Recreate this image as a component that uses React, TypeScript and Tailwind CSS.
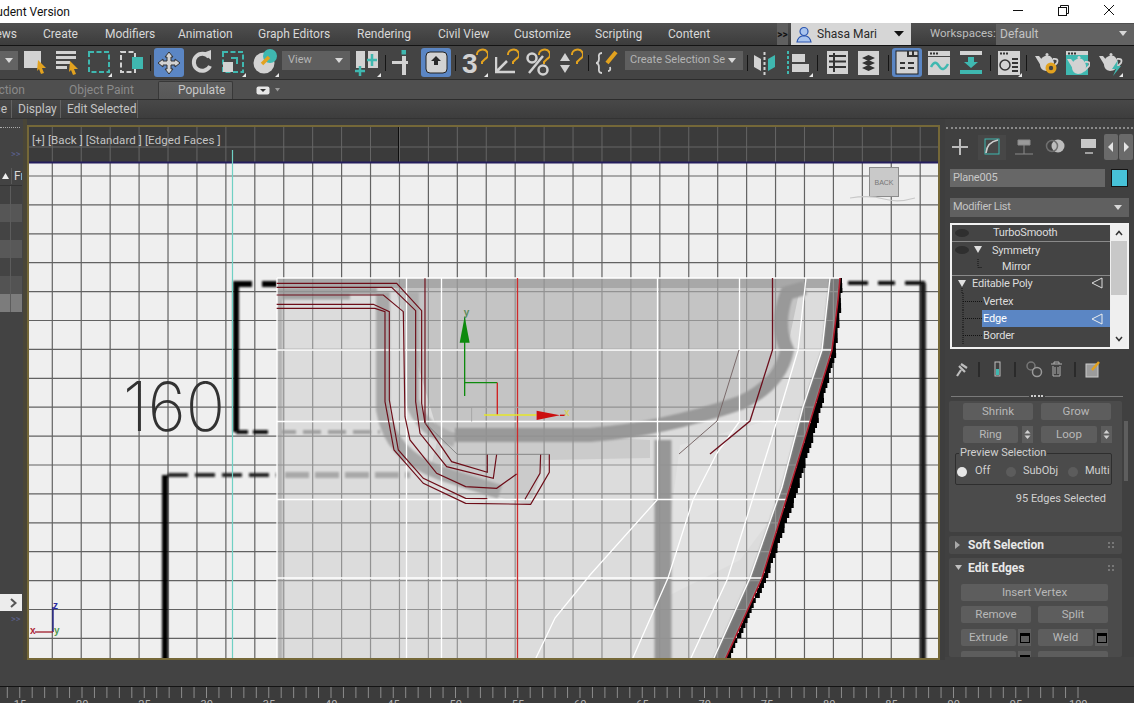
import React from 'react';

const teal = '#3fb8b0';
const lite = '#d2d2d2';
const gold = '#e2a21f';

const menus: [string, string][] = [
  ['Create', 'w-[62px]'],
  ['Modifiers', 'w-[73px]'],
  ['Animation', 'w-[80px]'],
  ['Graph Editors', 'w-[99px]'],
  ['Rendering', 'w-[81px]'],
  ['Civil View', 'w-[76px]'],
  ['Customize', 'w-[81px]'],
  ['Scripting', 'w-[73px]'],
  ['Content', 'w-[109px]'],
];

function Ico({ w, className = '', children }: { w: number; className?: string; children?: React.ReactNode }) {
  return (
    <svg width={w} height={30} viewBox={`0 0 ${w} 30`} className={`shrink-0 ${className}`}>
      {children}
    </svg>
  );
}

function Sep({ className = '' }: { className?: string }) {
  return <div className={`w-px h-[16px] mt-[8px] bg-[#151515] shrink-0 ${className}`} />;
}

function Corner({ x }: { x: number }) {
  return <polygon points={`${x},26 ${x},30 ${x - 4},30`} fill="#e8e8e8" />;
}

function Caret({ className = '' }: { className?: string }) {
  return (
    <svg width="8" height="6" viewBox="0 0 8 6" className={`shrink-0 ${className}`}>
      <polygon points="0,0 8,0 4,5" fill="#d8d8d8" />
    </svg>
  );
}

function Magnet({ x, y }: { x: number; y: number }) {
  return (
    <path
      d={`M${x} ${y + 4} a5.5 5 0 1 1 8 4 l-3 3 v2`}
      fill="none"
      stroke={gold}
      strokeWidth="2"
    />
  );
}

function Teapot({ fill = lite }: { fill?: string }) {
  return (
    <g>
      <polygon points="0,9 4,9 8,14 6,19" fill={fill} />
      <path d="M6 12 Q10 7 15 9 Q19 12 19 17 Q18 24 11 24 Q5 23 5 17 Z" fill={fill} />
      <circle cx="12" cy="7.500" r="1.500" fill={fill} />
      <path d="M18 12 Q24 11 22 16 L17 21" fill="none" stroke={fill} strokeWidth="1.800" />
    </g>
  );
}

function Toolbar() {
  return (
    <div className="h-[34px] bg-[#444444] border-b border-[#2c2c2c] flex items-start pt-[1px] overflow-hidden">
      <div className="w-[18px] h-[19px] mt-[4px] bg-[#636363] flex items-center justify-center shrink-0">
        <Caret />
      </div>
      <Ico w={24} className="ml-[6px]">
        <rect x="0" y="4" width="17" height="17" fill={lite} />
        <polygon points="14,13 22,21 18,21 20,26 17,27 15,22 13,24" fill={gold} />
      </Ico>
      <Ico w={24} className="ml-[8px]">
        <rect x="0" y="4" width="20" height="3" fill={lite} />
        <rect x="0" y="9" width="20" height="3" fill={lite} />
        <rect x="0" y="14" width="14" height="3" fill={lite} />
        <rect x="0" y="19" width="11" height="3" fill={lite} />
        <polygon points="14,14 22,22 18,22 20,27 17,28 15,23 13,25" fill={gold} />
      </Ico>
      <Ico w={24} className="ml-[8px]">
        <rect x="1" y="5" width="20" height="20" fill="none" stroke={teal} strokeWidth="2" strokeDasharray="5 2.5" />
        <Corner x={24} />
      </Ico>
      <Ico w={24} className="ml-[8px]">
        <rect x="1" y="5" width="14" height="20" fill="none" stroke={lite} strokeWidth="2" strokeDasharray="5 2.5" />
        <rect x="12" y="10" width="11" height="12" fill={teal} />
      </Ico>
      <Sep className="ml-[6px]" />
      <Ico w={30} className="ml-[3px]">
        <rect x="0" y="1" width="30" height="29" rx="3" fill="#5b86c4" />
        <path d="M15 5 L19 10 H17 V14 H21 V12 L26 16 L21 20 V18 H17 V22 H19 L15 27 L11 22 H13 V18 H9 V20 L4 16 L9 12 V14 H13 V10 H11 Z" fill={lite} stroke="#333" strokeWidth="1" />
      </Ico>
      <Ico w={22} className="ml-[7px]">
        <path d="M18 10 A8.5 8.5 0 1 0 19 19" fill="none" stroke={lite} strokeWidth="4" />
        <polygon points="12,6 20,3 20,13" fill={lite} />
      </Ico>
      <Ico w={24} className="ml-[9px]">
        <rect x="1" y="5" width="20" height="20" fill="none" stroke={teal} strokeWidth="2" strokeDasharray="5 2.5" />
        <rect x="1" y="15" width="10" height="10" fill={lite} />
        <path d="M9 11 H15 V17" fill="none" stroke={teal} strokeWidth="2" />
        <Corner x={24} />
      </Ico>
      <Ico w={26} className="ml-[7px]">
        <circle cx="11" cy="16" r="10.5" fill={lite} />
        <circle cx="17" cy="9" r="7" fill={teal} />
        <path d="M9 17 L16 10" stroke={gold} strokeWidth="3.5" />
        <Corner x={26} />
      </Ico>
      <div className="w-[68px] h-[19px] mt-[4px] ml-[3px] bg-[#5f5f5f] flex items-center justify-between pl-[6px] pr-[7px] text-[#b4b4b4] text-[11px] shrink-0">
        View
        <Caret />
      </div>
      <Ico w={26} className="ml-[5px]">
        <rect x="1" y="4" width="9" height="17" fill={lite} />
        <rect x="13" y="4" width="10" height="17" fill={lite} />
        <path d="M5 19 V29 M0 24 H10 M17 7 V19 M12 13 H22" stroke={teal} strokeWidth="2.5" />
        <Corner x={26} />
      </Ico>
      <Sep className="ml-[4px]" />
      <Ico w={24} className="ml-[6px]">
        <rect x="0" y="14" width="16" height="3" fill={lite} />
        <rect x="10" y="9" width="4" height="19" fill={lite} />
        <rect x="9.500" y="3" width="4.500" height="4.500" fill={teal} />
      </Ico>
      <Ico w={30} className="ml-[5px]">
        <rect x="0" y="1" width="30" height="29" rx="3" fill="#5b86c4" />
        <rect x="5" y="5" width="21" height="21" rx="4" fill={lite} stroke="#222" strokeWidth="1" />
        <path d="M13 14 H10 L15 9 L20 14 H17 V18 H13 Z" fill="#2a2a2a" />
      </Ico>
      <Sep className="ml-[4px]" />
      <Ico w={26} className="ml-[6px]">
        <text x="0" y="26" fontSize="28" fontWeight="700" fill={lite} fontFamily="Liberation Sans, sans-serif">3</text>
        <Magnet x={15} y={4} />
        <Corner x={26} />
      </Ico>
      <Ico w={24} className="ml-[7px]">
        <path d="M1 10 V25 H20 M1 25 L12 14" fill="none" stroke={lite} strokeWidth="2.5" />
        <Magnet x={13} y={4} />
      </Ico>
      <Ico w={24} className="ml-[7px]">
        <circle cx="6" cy="11" r="4.5" fill="none" stroke={lite} strokeWidth="2.5" />
        <circle cx="17" cy="23" r="4.5" fill="none" stroke={lite} strokeWidth="2.5" />
        <path d="M3 26 L17 9" stroke={lite} strokeWidth="2.5" />
        <Magnet x={13} y={4} />
      </Ico>
      <Ico w={24} className="ml-[9px]">
        <polygon points="1,14 11,14 6,6" fill={lite} />
        <polygon points="1,18 11,18 6,26" fill={lite} />
        <Magnet x={13} y={4} />
      </Ico>
      <Sep className="ml-[5px]" />
      <Ico w={24} className="ml-[7px]">
        <path d="M6 6 Q2 6 3 11 Q3 16 0 16 Q3 16 3 21 Q2 26 6 26" fill="none" stroke={lite} strokeWidth="1.8" />
        <path d="M12 24 Q15 24 14 20" fill="none" stroke={lite} strokeWidth="1.8" />
        <path d="M11 16 L20 5" stroke={gold} strokeWidth="4" />
      </Ico>
      <div className="w-[118px] h-[19px] mt-[4px] ml-[5px] bg-[#5f5f5f] flex items-center justify-between pl-[5px] pr-[7px] text-[#b4b4b4] text-[11px] whitespace-nowrap shrink-0">
        Create Selection Se
        <Caret />
      </div>
      <Sep className="ml-[4px]" />
      <Ico w={22} className="ml-[6px]">
        <polygon points="0,8 7,12 7,24 0,20" fill={lite} />
        <path d="M10.5 5 V28" stroke={lite} strokeWidth="2" strokeDasharray="3 2" />
        <polygon points="21,8 14,12 14,24 21,20" fill={teal} />
      </Ico>
      <Ico w={26} className="ml-[11px]">
        <path d="M1 4 V28" stroke={teal} strokeWidth="2" strokeDasharray="3 2" />
        <rect x="5" y="7" width="13" height="8" fill={lite} />
        <rect x="5" y="17" width="17" height="8" fill={lite} />
        <Corner x={26} />
      </Ico>
      <Sep className="ml-[4px]" />
      <Ico w={22} className="ml-[9px]">
        <rect x="0" y="4" width="21" height="23" fill={lite} />
        <path d="M2 9 H19 M2 14.5 H19 M2 20 H19 M7 6 V25" stroke="#333" strokeWidth="2" />
      </Ico>
      <Ico w={22} className="ml-[9px]">
        <rect x="0" y="4" width="21" height="24" fill={lite} />
        <path d="M4 11 L10.5 8 L17 11 L10.5 14 Z M4 16 L10.5 13 L17 16 L10.5 19 Z M4 21 L10.5 18 L17 21 L10.5 24 Z" fill="#333" />
      </Ico>
      <Sep className="ml-[8px]" />
      <Ico w={30} className="ml-[3px]">
        <rect x="0" y="1" width="30" height="29" rx="3" fill="#5b86c4" />
        <rect x="4" y="4" width="22" height="23" fill={lite} stroke="#222" />
        <path d="M16 4 V9 H26 M21 4 V9 M8 16 H13 M16 16 H22 M8 21 H13 M16 21 H22" stroke="#333" strokeWidth="2" fill="none" />
      </Ico>
      <Ico w={24} className="ml-[6px]">
        <rect x="0" y="4" width="22" height="5" fill={lite} />
        <rect x="0" y="10" width="22" height="18" fill={lite} />
        <path d="M3 20 Q7 12 11 19 T20 17" fill="none" stroke={teal} strokeWidth="2.5" />
        <path d="M2 6.5 H10" stroke="#333" strokeWidth="2" strokeDasharray="2 1" />
      </Ico>
      <Ico w={24} className="ml-[8px]">
        <rect x="0" y="4" width="22" height="4" fill={lite} />
        <rect x="0" y="23" width="22" height="4" fill={teal} />
        <path d="M8 10 H14 V15 H18 L11 21 L4 15 H8 Z" fill={teal} />
      </Ico>
      <Sep className="ml-[6px]" />
      <Ico w={24} className="ml-[7px]">
        <rect x="0" y="4" width="22" height="24" fill={lite} />
        <path d="M2 6.5 H10" stroke="#333" strokeWidth="2" strokeDasharray="2 1" />
        <circle cx="7" cy="18" r="5" fill="none" stroke="#333" strokeWidth="1.5" />
        <path d="M14 12 H20 M14 16 H20 M14 20 H20 M14 24 H20" stroke="#333" strokeWidth="2" />
        <Corner x={24} />
      </Ico>
      <Sep className="ml-[4px]" />
      <Ico w={24} className="ml-[8px]">
        <Teapot />
        <circle cx="16" cy="21" r="5.500" fill={gold} />
        <circle cx="16" cy="21" r="2.200" fill="#444" />
      </Ico>
      <Ico w={24} className="ml-[7px]">
        <rect x="0" y="4" width="22" height="24" fill={teal} />
        <rect x="0" y="4" width="22" height="4" fill={lite} />
        <path d="M2 6.5 H10" stroke="#333" strokeWidth="2" strokeDasharray="2 1" />
        <g transform="translate(1 3)"><Teapot /></g>
      </Ico>
      <Ico w={24} className="ml-[9px]">
        <Teapot />
        <path d="M19 13 L13 22 H17 L14 29 L22 19 H18 Z" fill={teal} />
        <Corner x={24} />
      </Ico>
    </div>
  );
}

function LeftStrip() {
  const rows = ['bg-[#414141]', 'bg-[#565656]', 'bg-[#444444]', 'bg-[#585858]', 'bg-[#444444]', 'bg-[#535353]', 'bg-[#7c7c7c]'];
  return (
    <div className="w-[27px] shrink-0 bg-[#434343] flex flex-col border-r-[4px] border-[#4a4637]">
      <div className="h-[3px] mt-[8px] w-[20px] border-t border-dotted border-[#aaaaaa]" />
      <div className="h-[29px] mt-[1px] text-[9px] text-[#5c628f] flex items-end pl-[11px] leading-[12px]">&gt;&gt;</div>
      <div className="h-[19px] mt-[7px] w-[22px] flex items-center text-[12px] text-[#d8d8d8] border-b border-[#333333] overflow-hidden">
        <svg width="11" height="10" viewBox="0 0 11 10" className="shrink-0">
          <polygon points="2,8 9,8 5.5,2" fill="#eeeeee" />
        </svg>
        <span className="border-l border-[#5a5a5a] pl-[2px] leading-[16px]">Fr</span>
      </div>
      {rows.map((r, i) => (
        <div key={i} className={`h-[18px] w-[22px] ${r} flex`}>
          <div className="w-[11px] h-full border-r border-[#5c5c5c]" />
        </div>
      ))}
      <div className="w-[22px] h-[17px] mt-[282px] bg-[#ececec] flex items-center justify-end pr-[5px]">
        <svg width="7" height="10" viewBox="0 0 7 10">
          <path d="M1 1 L5.5 5 L1 9" fill="none" stroke="#555555" strokeWidth="2" />
        </svg>
      </div>
      <div className="mt-[2px] pl-[11px] text-[9px] text-[#5c628f]">&gt;&gt;</div>
    </div>
  );
}

const gridX = Array.from({ length: 31 }, (_, i) => 52.3 + i * 28.93);
const gridY = Array.from({ length: 17 }, (_, i) => 176 + i * 28.9);

function Grid({ color, top }: { color: string; top: number }) {
  return (
    <g stroke={color} strokeWidth="1.200">
      {gridX.map((x) => (
        <line key={x} x1={x} y1={top} x2={x} y2={660} />
      ))}
      {gridY.map((y) => (
        <line key={y} x1={27} y1={y} x2={940} y2={y} />
      ))}
    </g>
  );
}

// right outline of the plane: [y, x, width of the black scan line beside it]
const outline = [
  [278, 840, 2],
  [300, 838, 3],
  [350, 832, 4],
  [422, 810, 7],
  [497, 787, 8],
  [578, 762, 4],
  [660, 725, 3],
];

function outlineAt(y: number) {
  const i = Math.max(outline.findIndex((p) => p[0] > y) - 1, 0);
  const [y0, x0, w0] = outline[i];
  const [y1, x1, w1] = outline[i + 1];
  const t = (y - y0) / (y1 - y0);
  return { x: x0 + (x1 - x0) * t, w: w0 + (w1 - w0) * t };
}

const scanY = Array.from({ length: 77 }, (_, i) => 278 + i * 5);

function Scene() {
  const edge = '840,278 838,300 832,350 810,422 787,497 762,578 725,660';
  return (
    <svg width="909" height="531" viewBox="29 127 909 531" className="block" fontFamily="Liberation Sans, sans-serif">
      <defs>
        <clipPath id="plane">
          <polygon points={`277,278 ${edge} 277,660`} />
        </clipPath>
        <filter id="soft">
          <feGaussianBlur stdDeviation="1.2" />
        </filter>
        <filter id="faint">
          <feGaussianBlur stdDeviation="0.6" />
        </filter>
      </defs>
      <rect x="27" y="125" width="913" height="38" fill="#3b3b3b" />
      <rect x="27" y="163" width="913" height="500" fill="#efefef" />
      <g stroke="#666666" strokeWidth="1">
        {gridX.map((x) => (
          <line key={x} x1={x} y1={127} x2={x} y2={163} />
        ))}
        <line x1="29" y1="147" x2="940" y2="147" />
      </g>
      <line x1="398.5" y1="127" x2="398.5" y2="163" stroke="#0c0c0c" strokeWidth="1" />
      <Grid color="#626262" top={163} />
      <rect x="27" y="161.500" width="913" height="2" fill="#241d5c" />

      {/* sketch behind the plane */}
      <g filter="url(#soft)">
        <path d="M236 432 V284 H252 M262 284 H277" fill="none" stroke="#050505" strokeWidth="6" />
        <path d="M236 432 H248 M253 432 H268" stroke="#111111" strokeWidth="4" fill="none" />
        <path d="M165 660 V475" stroke="#050505" strokeWidth="6" fill="none" />
        <path d="M168 475 H277" stroke="#222222" strokeWidth="4" strokeDasharray="20 7" fill="none" />
        <path d="M848 283 H868 M878 283 H895 M905 283 H925" stroke="#111111" strokeWidth="4" fill="none" />
        <path d="M923 283 V660" stroke="#1c1c1c" strokeWidth="6" fill="none" />
      </g>
      <text x="123" y="431" fontSize="68" fontWeight="200" fill="#333333" fontFamily="Inter, sans-serif" textLength="102" lengthAdjust="spacingAndGlyphs" filter="url(#faint)">160</text>

      {/* black edge of the outline, stepped like the low-res backdrop */}
      <g fill="#000000" filter="url(#faint)">
        {scanY.map((y) => {
          const { x, w } = outlineAt(y);
          return <rect key={y} x={Math.round(x / 2) * 2 - 1} y={y} width={w + 1} height={5} />;
        })}
      </g>

      <g clipPath="url(#plane)">
        <rect x="277" y="278" width="570" height="385" fill="#dcdcdc" />
        <polygon points="395,288 800,288 787,350 745,405 650,425 500,440 440,440" fill="#c4c4c4" />
        <polygon points="680,445 770,420 810,422 787,497 740,560 660,600" fill="#e2e2e2" />
        <polygon points="440,430 650,440 650,458 545,460 530,505 490,495 430,470" fill="#cbcbcb" />
        <polygon points="277,278 840,278 840,288 277,288" fill="#a8a8a8" />
        <g filter="url(#soft)" fill="none">
          <path d="M277 291 H377 M277 296 H350" stroke="#a4a4a4" strokeWidth="7" />
          <path d="M383 292 V410 Q390 455 440 473 L500 492" stroke="#a8a8a8" strokeWidth="14" />
          <path d="M412 292 V400 Q420 430 455 440" stroke="#aeaeae" strokeWidth="14" />
          <path d="M455 435 H590 Q660 430 740 403 Q780 385 787 350 Q775 325 787 293 L805 288" stroke="#999999" strokeWidth="14" />
          <path d="M663 440 V660" stroke="#979797" strokeWidth="17" />
          <path d="M278 432 H380" stroke="#a2a2a2" strokeWidth="4" strokeDasharray="18 7" />
          <path d="M285 475 H410" stroke="#a8a8a8" strokeWidth="6" strokeDasharray="24 6" />
          <path d="M280 295 V660" stroke="#b2b2b2" strokeWidth="5" />
          <polygon points="830,278 840,278 838,300 832,350 810,422 787,497 762,578 725,660 713,660 750,578 782,487 803,407 822,350" fill="#777777" />
        </g>
        <Grid color="#929292" top={278} />
      </g>

      {/* white mesh */}
      <g stroke="#ffffff" strokeWidth="1.300" fill="none">
        <path d="M277 278 H840 M277 278 V660" />
        <path d="M277 350 H832 M277 421.500 H810 M277 499.500 H787 M277 578 H762" />
        <path d="M406.500 278 V660 M441.500 278 V660 M657.500 278 V499.500 L590 575 L555 618 L535 660" />
        <path d="M739.500 278 V421.500 L717 453 L693 500 L668 578 L632 660" />
        <path d="M806 278 L798 350 L772 437 L747 517 L727 580 L690 660" />
        <path d="M830 278 L822 350 L803 407 L782 487 L750 578 L713 660" />
      </g>

      {/* selected edges */}
      <polyline points={edge} fill="none" stroke="#b01c2c" strokeWidth="1.600" />
      <line x1="517.500" y1="278" x2="517.500" y2="660" stroke="#cf2a2a" strokeWidth="1.300" />
      <path d="M739 350 L717 421 L679 454" fill="none" stroke="#7a6a6a" strokeWidth="1" />
      <path d="M772.500 278 V350 L750 421 L710 454" fill="none" stroke="#6c0f1c" strokeWidth="1.300" />
      <g transform="translate(270 270) scale(0.3333)" fill="none" stroke="#6d0d18" strokeWidth="3.500">
        <polyline points="465,25 465,458" />
        <polyline points="20,40 380,40 455,122 455,400 465,458 545,575 652,607 652,553" />
        <polyline points="20,52 365,52 437,122 437,395 450,490 530,590 670,625 680,553" />
        <polyline points="20,75 340,75 400,125 405,440 420,510 500,610 587,650 680,655 740,612" />
        <polyline points="20,103 310,103 358,125 358,390 385,540 460,625 587,685 652,686" />
        <polyline points="20,115 315,115 345,125 345,395 372,540 460,640 587,700 782,703 838,607 838,553" />
        <polyline points="765,688 810,610 812,553" />
        <polyline points="465,458 562,553 838,553" stroke="#777777" strokeWidth="2.500" />
        <polyline points="605,412 605,455" stroke="#a0a0a0" strokeWidth="2.500" />
        <polyline points="605,412 960,412" stroke="#a6a6a6" strokeWidth="2.500" />

        {/* move gizmo */}
        <line x1="584" y1="140" x2="584" y2="378" stroke="#0d8a0d" strokeWidth="4" />
        <polygon points="584,140 569,218 599,218" fill="#0d8a0d" stroke="none" />
        <polyline points="584,338 682,338" stroke="#0d8a0d" strokeWidth="4" />
        <polyline points="682,338 682,435" stroke="#cf2020" strokeWidth="4" />
        <line x1="642" y1="435" x2="800" y2="435" stroke="#e6e62a" strokeWidth="4" />
        <polygon points="800,422 800,450 870,436" fill="#cc0f0f" stroke="none" />
        <line x1="870" y1="436" x2="885" y2="436" stroke="#cc0f0f" strokeWidth="4" />
        <text x="581" y="138" fontSize="30" fontWeight="700" fill="#5a8a5a" stroke="none">y</text>
        <text x="883" y="438" fontSize="30" fontWeight="700" fill="#d8d060" stroke="none">x</text>
      </g>

      {/* view cube */}
      <rect x="869.500" y="167.500" width="29" height="29" fill="#c9c9c9" stroke="#8c8c8c" />
      <text x="884" y="185" fontSize="7" fill="#777777" textAnchor="middle">BACK</text>
      <path d="M850 198 Q870 195 884 199 T915 198" fill="none" stroke="#c8c8c8" strokeWidth="1.200" />

      {/* axis tripod */}
      <path d="M53 632 V607" stroke="#101080" strokeWidth="1.300" />
      <path d="M53 632 H35" stroke="#a01c2c" strokeWidth="1.300" />
      <text x="53" y="609" fontSize="10" fontWeight="700" fill="#2a2aa0">z</text>
      <text x="30" y="634" fontSize="10" fontWeight="700" fill="#b02a3a">x</text>
      <text x="54" y="634" fontSize="10" fontWeight="700" fill="#4f9a4f">y</text>
      <line x1="232.500" y1="150" x2="232.500" y2="660" stroke="#6fd0c4" strokeWidth="1.200" />
    </svg>
  );
}

function Viewport() {
  return (
    <div className="relative w-[913px] h-[535px] mt-[6px] border-2 border-[#756838] overflow-hidden shrink-0">
      <Scene />
      <div className="absolute left-[3px] top-[6px] text-[11.500px] leading-[14px] tracking-[0.1px] text-[#c4c4c4] whitespace-nowrap">
        [+] [Back ] [Standard ] [Edged Faces ]
      </div>
    </div>
  );
}

function Btn({ className = '', children }: { className?: string; children?: React.ReactNode }) {
  return (
    <div className={`h-[17px] bg-[#5d5d5d] rounded-[2px] text-[11.500px] text-[#b8b8b8] flex items-center justify-center shrink-0 ${className}`}>
      {children}
    </div>
  );
}

function Spin({ className = '' }: { className?: string }) {
  return (
    <div className={`w-[11px] h-[17px] bg-[#5d5d5d] flex items-center justify-center shrink-0 ${className}`}>
      <svg width="7" height="11" viewBox="0 0 7 11">
        <polygon points="0.500,4.500 6.500,4.500 3.500,1" fill="#d0d0d0" />
        <polygon points="0.500,6.500 6.500,6.500 3.500,10" fill="#d0d0d0" />
      </svg>
    </div>
  );
}

function Settings({ className = '' }: { className?: string }) {
  return (
    <div className={`w-[13px] h-[17px] bg-[#5d5d5d] flex items-center justify-center shrink-0 ${className}`}>
      <div className="w-[10px] h-[10px] border border-black border-t-[3px]" />
    </div>
  );
}

function Radio({ on = false }: { on?: boolean }) {
  return <div className={`w-[10px] h-[10px] rounded-full shrink-0 ${on ? 'bg-[#e6e6e6]' : 'bg-[#5c5c5c]'}`} />;
}

function Grip() {
  return <div className="w-[6px] h-[6px] border-t-2 border-b-2 border-dotted border-[#777777]" />;
}

function StackRow({ gutter, indent, label, active, line }: { gutter?: React.ReactNode; indent: string; label: string; active?: boolean; line?: boolean }) {
  return (
    <div className={`h-[17px] flex text-[11px] tracking-[-0.2px] leading-[16px] text-[#dcdcdc] ${line ? 'border-b border-[#8a8a8a]' : ''}`}>
      <svg width="30" height="17" viewBox="0 0 30 17" className="shrink-0">
        {gutter}
      </svg>
      <div className={`flex-1 flex justify-between items-center ${active ? 'bg-[#5b86c4] text-white' : ''}`}>
        <span className={indent}>{label}</span>
        {active !== undefined && (
          <svg width="13" height="12" viewBox="0 0 13 12" className="mr-[6px]">
            <polygon points="1,6 11,1 11,11" fill="none" stroke="#eeeeee" strokeWidth="1" />
          </svg>
        )}
      </div>
    </div>
  );
}

const eye = <ellipse cx="10" cy="8" rx="7" ry="4" fill="#2f2f2f" />;
const down = (x: number) => <polygon points={`${x},4 ${x + 8},4 ${x + 4},11`} fill="#e0e0e0" />;
const branch = <path d="M11 0 V17 M11 8.500 H30" stroke="#111111" strokeDasharray="1 1" fill="none" />;

function CommandPanel() {
  return (
    <div className="w-[189px] ml-[5px] shrink-0 h-[541px] bg-[#404040] flex flex-col overflow-hidden">
      <div className="mt-[8px] mx-[1px] h-[2px] shrink-0 border-t-2 border-dotted border-[#8a8a8a]" />
      <div className="h-[26px] mt-[5px] flex items-center shrink-0">
        <svg width="159" height="26" viewBox="0 0 159 26" className="shrink-0">
          <path d="M15 5 V21 M7 13 H23" stroke="#bcbcbc" strokeWidth="2" />
          <rect x="33" y="1" width="28" height="25" fill="#474747" />
          <rect x="40" y="5" width="14" height="15" fill="none" stroke={teal} strokeWidth="1" />
          <path d="M41 19 Q42 8 53 6" fill="none" stroke="#cfcfcf" strokeWidth="1.600" />
          <path d="M73 6 H85 V11 H73 Z M70 20 H88 M79 11 V20" fill="#9a9a9a" stroke="#8a8a8a" />
          <circle cx="113" cy="12" r="6.500" fill="#bdbdbd" />
          <circle cx="107" cy="12" r="5.500" fill="none" stroke="#6f6f6f" strokeWidth="1.500" />
          <rect x="136" y="5" width="15" height="9" fill="#c8c8c8" />
          <path d="M140 19 H148" stroke="#c0c0c0" strokeWidth="1.500" />
        </svg>
        <div className="w-[14px] h-[26px] bg-[#6a6a6a] rounded-[2px] flex items-center justify-center">
          <svg width="6" height="10" viewBox="0 0 6 10"><polygon points="5,0 5,10 0,5" fill="#e4e4e4" /></svg>
        </div>
        <div className="w-[14px] h-[26px] ml-[1px] bg-[#6a6a6a] rounded-[2px] flex items-center justify-center">
          <svg width="6" height="10" viewBox="0 0 6 10"><polygon points="1,0 1,10 6,5" fill="#e4e4e4" /></svg>
        </div>
      </div>
      <div className="flex mt-[9px] ml-[5px] shrink-0">
        <div className="w-[155px] h-[18px] bg-[#676767] text-[11px] tracking-[-0.2px] leading-[18px] pl-[3px] text-[#c8c8c8]">Plane005</div>
        <div className="w-[17px] h-[18px] ml-[6px] bg-[#47c2d8] border border-[#141414]" />
      </div>
      <div className="w-[179px] h-[19px] mt-[11px] ml-[5px] shrink-0 bg-[#606060] flex items-center justify-between pl-[3px] pr-[7px] text-[11px] tracking-[-0.3px] text-[#c4c4c4]">
        Modifier List
        <Caret />
      </div>
      <div className="w-[179px] h-[126px] mt-[6px] ml-[5px] shrink-0 border-2 border-[#f2f2f2] flex bg-[#444444] overflow-hidden">
        <div className="w-[160px] h-full overflow-hidden">
          <StackRow gutter={eye} indent="ml-[11px]" label="TurboSmooth" line />
          <StackRow gutter={<>{eye}{down(22)}</>} indent="ml-[10px]" label="Symmetry" />
          <StackRow gutter={<path d="M26 0 V8.500 H30" stroke="#111111" strokeDasharray="1 1" fill="none" />} indent="ml-[20px]" label="Mirror" line />
          <div className="h-[17px] flex text-[11px] tracking-[-0.2px] leading-[16px] text-[#dcdcdc]">
            <svg width="20" height="17" viewBox="0 0 20 17" className="shrink-0">{down(6)}<path d="M10 12 V17" stroke="#111111" strokeDasharray="1 1" /></svg>
            <span className="flex-1">Editable Poly</span>
            <svg width="13" height="12" viewBox="0 0 13 12" className="mr-[6px] mt-[1px]">
              <polygon points="1,6 11,1 11,11" fill="none" stroke="#dddddd" strokeWidth="1" />
            </svg>
          </div>
          <StackRow gutter={branch} indent="ml-[1px]" label="Vertex" />
          <StackRow gutter={branch} indent="ml-[1px]" label="Edge" active />
          <StackRow gutter={branch} indent="ml-[1px]" label="Border" />
        </div>
        <div className="w-[17px] h-full bg-[#efefef] flex flex-col items-center justify-between">
          <svg width="10" height="16" viewBox="0 0 10 16"><path d="M2 10 L5 6.500 L8 10" fill="none" stroke="#333333" strokeWidth="1.500" /></svg>
          <div className="w-[16px] flex-1 bg-[#c8c8c8] mb-[36px]" />
          <svg width="10" height="16" viewBox="0 0 10 16"><path d="M2 6 L5 9.500 L8 6" fill="none" stroke="#333333" strokeWidth="1.500" /></svg>
        </div>
      </div>
      <svg width="160" height="20" viewBox="0 0 160 20" className="mt-[10px] ml-[5px] shrink-0">
        <path d="M7 17 L11 11 M9 7 L15 13 M11 5 L17 9" stroke="#bdbdbd" strokeWidth="2.200" fill="none" />
        <path d="M29 3 V18 M65 3 V18 M125 3 V18" stroke="#141414" />
        <rect x="45" y="3" width="5" height="14" fill="none" stroke="#bdbdbd" />
        <rect x="46" y="10" width="3" height="6" fill={teal} />
        <circle cx="81" cy="7" r="4" fill="none" stroke="#777777" strokeWidth="1.500" />
        <circle cx="87" cy="13" r="4.500" fill="none" stroke="#9a9a9a" strokeWidth="1.500" />
        <path d="M101 5 H112 M103 7 V17 H110 V7 M105 8 V15 M108 8 V15 M104 5 V3 H109 V5" fill="none" stroke="#b0b0b0" />
        <rect x="136" y="5" width="12" height="13" fill="#9c9c9c" stroke="#cccccc" />
        <path d="M142 11 L149 3" stroke={gold} strokeWidth="2.500" />
      </svg>
      <div className="flex items-center mt-[16px] ml-[6px] w-[172px] shrink-0">
        <div className="flex-1 h-px bg-[#7a7a7a]" />
        <div className="w-[12px] mx-[2px] h-[3px] border-t-2 border-dotted border-[#cccccc]" />
        <div className="flex-1 h-px bg-[#7a7a7a]" />
      </div>
      <div className="flex flex-1 min-h-0 mt-[3px] ml-[4px]">
        <div className="w-[173px] flex flex-col gap-[4px]">
          <div className="h-[131px] bg-[#4b4b4b] rounded-[2px] flex flex-col shrink-0">
            <div className="flex mt-[2px] pl-[14px]">
              <Btn className="w-[70px]">Shrink</Btn>
              <Btn className="w-[70px] ml-[8px]">Grow</Btn>
            </div>
            <div className="flex mt-[6px] pl-[14px]">
              <Btn className="w-[55px]">Ring</Btn>
              <Spin className="ml-[4px]" />
              <Btn className="w-[56px] ml-[8px]">Loop</Btn>
              <Spin className="ml-[4px]" />
            </div>
            <div className="relative ml-[6px] mt-[10px] w-[157px] h-[32px] border border-[#2e2e2e] rounded-[2px] flex items-center pl-[1px] pt-[5px] text-[11px] text-[#d0d0d0]">
              <span className="absolute left-[3px] -top-[8px] bg-[#4b4b4b] px-[1px] leading-[14px]">Preview Selection</span>
              <Radio on />
              <span className="ml-[8px] w-[31px]">Off</span>
              <Radio />
              <span className="ml-[7px] w-[45px]">SubObj</span>
              <Radio />
              <span className="ml-[7px]">Multi</span>
            </div>
            <div className="mt-[7px] w-[157px] text-right text-[11px] text-[#d0d0d0] leading-[14px]">95 Edges Selected</div>
          </div>
          <div className="h-[18px] bg-[#4b4b4b] rounded-[2px] flex items-center pl-[6px] text-[12px] font-bold text-[#e8e8e8] shrink-0">
            <svg width="6" height="8" viewBox="0 0 6 8" className="shrink-0"><polygon points="0,0 0,8 5,4" fill="#a8a8a8" /></svg>
            <span className="ml-[7px] flex-1">Soft Selection</span>
            <div className="mr-[8px]"><Grip /></div>
          </div>
          <div className="flex-1 min-h-0 bg-[#4b4b4b] rounded-[2px] flex flex-col overflow-hidden">
            <div className="h-[20px] flex items-center pl-[6px] text-[12px] font-bold text-[#e8e8e8] shrink-0">
              <svg width="7" height="6" viewBox="0 0 7 6" className="shrink-0"><polygon points="0,0 7,0 3.500,5" fill="#c0c0c0" /></svg>
              <span className="ml-[6px] flex-1">Edit Edges</span>
              <div className="mr-[8px]"><Grip /></div>
            </div>
            <div className="ml-[12px] mt-[6px] flex flex-col gap-[5px] w-[147px] shrink-0">
              <Btn className="w-[147px]">Insert Vertex</Btn>
              <div className="flex gap-[7px]">
                <Btn className="w-[70px]">Remove</Btn>
                <Btn className="w-[70px]">Split</Btn>
              </div>
              <div className="flex mt-[1px]">
                <Btn className="w-[55px]">Extrude</Btn>
                <Settings className="ml-[2px]" />
                <Btn className="w-[55px] ml-[7px]">Weld</Btn>
                <Settings className="ml-[2px]" />
              </div>
              <div className="flex">
                <Btn className="w-[55px]" />
                <Settings className="ml-[2px]" />
                <Btn className="w-[70px] ml-[7px]" />
              </div>
            </div>
          </div>
        </div>
        <div className="w-[4px] h-[60px] mt-[20px] ml-[2px] bg-[#5e5e5e]" />
      </div>
      <div className="h-[3px] shrink-0 bg-[#434343]" />
    </div>
  );
}

function Ruler() {
  const ticks = Array.from({ length: 87 }, (_, i) => 7.3 + i * 12.45);
  const labels = Array.from({ length: 18 }, (_, i) => 15 + i * 5);
  return (
    <div className="h-[17px] bg-[#3c3c3c] border-t border-[#141414]">
      <svg width="1134" height="16" viewBox="0 0 1134 16" className="block" fontFamily="Roboto, sans-serif">
        {ticks.map((x) => (
          <line key={x} x1={x} y1={0} x2={x} y2={11} stroke="#8c8c8c" />
        ))}
        {labels.map((n, i) => (
          <text key={n} x={20 + i * 62.25} y={21} fontSize="11" fill="#b4b4b4" textAnchor="middle">
            {n}
          </text>
        ))}
      </svg>
    </div>
  );
}

export default function App() {
  return (
    <div className="w-[1134px] h-[703px] overflow-hidden bg-[#434343] flex flex-col font-['Roboto',sans-serif] text-[12px]">
      <div className="h-[23px] bg-white flex items-center shrink-0">
        <div className="w-[70px] flex justify-end overflow-hidden whitespace-nowrap text-[#111111]">Student Version</div>
        <svg width="1064" height="23" viewBox="0 0 1064 23" className="shrink-0">
          <path d="M943 10.500 H953" stroke="#111111" />
          <rect x="988.500" y="7.500" width="8" height="8" fill="none" stroke="#111111" />
          <path d="M990.500 7.500 V5.500 H998.500 V13.500 H996.500" fill="none" stroke="#111111" />
          <path d="M1034 5 L1044 15 M1044 5 L1034 15" stroke="#111111" />
        </svg>
      </div>
      <div className="h-[23px] bg-gradient-to-b from-[#505050] to-[#3c3c3c] border-b border-[#141414] flex items-center shrink-0 text-[#d8d8d8] whitespace-nowrap">
        <div className="w-[43px] shrink-0 flex">
          <span className="w-[17px] flex justify-end overflow-hidden">Views</span>
        </div>
        {menus.map(([m, w]) => (
          <div key={m} className={`${w} shrink-0`}>{m}</div>
        ))}
        <div className="w-[11px] h-full bg-[#606060] text-[10px] font-bold text-[#111111] flex items-center justify-center shrink-0">&gt;&gt;</div>
        <div className="w-[120px] h-full ml-[3px] bg-[#d6d6d6] flex items-center pl-[5px] pr-[3px] shrink-0 text-[#2a2a2a]">
          <svg width="16" height="17" viewBox="0 0 16 17" className="shrink-0">
            <circle cx="8" cy="5.500" r="4" fill="#a9c4ee" stroke="#2a55b0" strokeWidth="1.200" />
            <path d="M1 16 Q2 11 6 10 H10 Q14 11 15 16 Z" fill="#a9c4ee" stroke="#2a55b0" strokeWidth="1.200" />
          </svg>
          <span className="ml-[5px] flex-1">Shasa Mari</span>
          <svg width="10" height="6" viewBox="0 0 10 6" className="mr-[4px]"><polygon points="0,0 10,0 5,5.500" fill="#111111" /></svg>
        </div>
        <span className="ml-[19px] w-[66px] shrink-0 text-[11.500px] text-[#bdbdbd]">Workspaces:</span>
        <div className="flex-1 h-[21px] bg-[#626262] flex items-center justify-between pl-[4px] pr-[7px] text-[#c4c4c4]">
          Default
          <Caret />
        </div>
      </div>
      <Toolbar />
      <div className="h-[20px] bg-[#4f4f4f] border-b border-[#2c2c2c] flex items-end shrink-0 whitespace-nowrap">
        <div className="w-[25px] flex justify-end overflow-hidden text-[#8a8a8a] h-[18px] leading-[18px]">Selection</div>
        <div className="ml-[44px] w-[89px] text-[#8a8a8a] h-[18px] leading-[18px]">Object Paint</div>
        <div className="w-[75px] h-[18px] bg-gradient-to-b from-[#5e5e5e] to-[#575757] border-x border-t border-[#383838] rounded-t-[2px] pl-[19px] text-[#c8c8c8] leading-[16px]">Populate</div>
        <div className="ml-[23px] h-[18px] flex items-center gap-[4px]">
          <svg width="15" height="9" viewBox="0 0 15 9"><rect x="0.500" y="0.500" width="13" height="8" rx="2" fill="#e6e6e6" /><polygon points="4,3 10,3 7,6" fill="#333333" /></svg>
          <svg width="5" height="4" viewBox="0 0 5 4"><polygon points="0,0 5,0 2.500,3.500" fill="#9a9a9a" /></svg>
        </div>
      </div>
      <div className="h-[19px] bg-gradient-to-b from-[#484848] to-[#3d3d3d] border-b border-[#333333] flex items-stretch shrink-0 whitespace-nowrap text-[#c4c4c4]">
        <div className="w-[12px] flex justify-end overflow-hidden border-r border-[#626262] pr-[4px]">Face</div>
        <div className="w-[49px] border-r border-[#626262] pl-[6px]">Display</div>
        <div className="w-[77px] border-r border-[#626262] pl-[6px]">Edit Selected</div>
      </div>
      <div className="h-[541px] flex shrink-0 bg-[#3e3e3e]">
        <LeftStrip />
        <Viewport />
        <CommandPanel />
      </div>
      <div className="h-[26px] bg-[#434343] shrink-0" />
      <Ruler />
    </div>
  );
}
